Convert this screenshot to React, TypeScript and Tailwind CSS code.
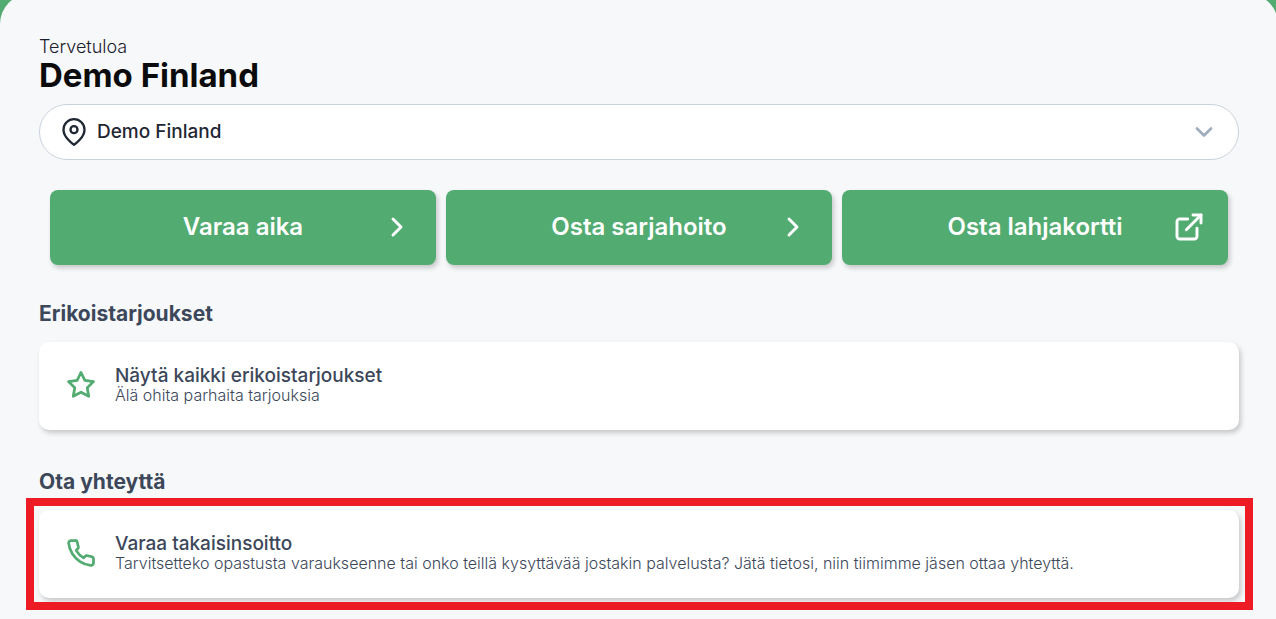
import React from 'react';
import type { IconType } from 'react-icons';
import { FiChevronDown, FiChevronRight, FiExternalLink, FiMapPin, FiPhone, FiStar } from 'react-icons/fi';

interface Action {
  label: string;
  icon: IconType;
}

interface InfoCardProps {
  icon: IconType;
  title: string;
  description: string;
  highlighted?: boolean;
}

const actions: Action[] = [
  { label: 'Varaa aika', icon: FiChevronRight },
  { label: 'Osta sarjahoito', icon: FiChevronRight },
  { label: 'Osta lahjakortti', icon: FiExternalLink },
];

const ActionButton: React.FC<Action> = ({ label, icon: Icon }) => (
  <button
    type="button"
    className="grid h-[75px] cursor-pointer grid-cols-[1fr_auto_1fr] items-center rounded-lg bg-[#52ab71] px-[23px] pb-[2px] text-white shadow-[2px_3px_5px_rgba(0,0,0,0.2)]"
  >
    <span className="col-start-2 whitespace-nowrap text-[24px] leading-8 font-semibold">{label}</span>
    <Icon size={32} strokeWidth={2.2} className="justify-self-end" aria-hidden="true" />
  </button>
);

const InfoCard: React.FC<InfoCardProps> = ({ icon: Icon, title, description, highlighted }) => (
  <div className="relative">
    <button
      type="button"
      className="flex h-[88px] w-full cursor-pointer items-center gap-[19px] rounded-[10px] bg-white px-[27px] pb-[2px] text-left shadow-[2px_3px_5px_rgba(0,0,0,0.2)]"
    >
      <Icon size={30} strokeWidth={2.2} className="shrink-0 text-[#52ab71]" aria-hidden="true" />
      <span className="flex flex-col">
        <span className="text-[19px] leading-5 font-medium text-[#3c475a]">{title}</span>
        <span className="text-[16px] leading-[18px] font-light text-[#3c475a]">{description}</span>
      </span>
    </button>
    {highlighted && (
      <div className="pointer-events-none absolute -inset-y-3 -right-[14px] -left-[13px] border-8 border-[#ed1c24]" />
    )}
  </div>
);

export default function App() {
  return (
    <div className="min-h-screen overflow-hidden bg-[#52ab71] font-['Inter',sans-serif]">
      {/* Panel runs slightly past the top and right edges, so only part of each corner shows */}
      <main className="-mt-[6px] -mr-[2px] min-h-[calc(100vh+6px)] rounded-t-[30px] bg-[#f7f8fa] pt-[41px] pr-[39px] pb-[21px] pl-[39px]">
        <header>
          <p className="text-[18px] leading-6 font-light text-[#1a202c]">Tervetuloa</p>
          <h1 className="text-[33px] leading-8 font-bold text-[#0b0b0d]">Demo Finland</h1>
        </header>

        <div className="mt-[13px] flex h-14 items-center rounded-full border border-[#cbd2dc] bg-white px-5 text-[#1f2733]">
          <FiMapPin size={28} className="shrink-0" aria-hidden="true" />
          <select
            aria-label="Toimipiste"
            className="ml-[9px] h-full min-w-0 flex-1 cursor-pointer appearance-none bg-transparent text-[19px] font-medium outline-none"
          >
            <option>Demo Finland</option>
          </select>
          <FiChevronDown size={28} strokeWidth={2.4} className="pointer-events-none shrink-0 text-[#a0aec0]" aria-hidden="true" />
        </div>

        <div className="mt-[30px] grid grid-cols-3 gap-[10px] px-[11px]">
          {actions.map((action) => (
            <ActionButton key={action.label} {...action} />
          ))}
        </div>

        <section className="mt-[35px]">
          <h2 className="mb-[14px] text-[21px] leading-7 font-bold text-[#3c475a]">Erikoistarjoukset</h2>
          <InfoCard icon={FiStar} title="Näytä kaikki erikoistarjoukset" description="Älä ohita parhaita tarjouksia" />
        </section>

        <section className="mt-[38px]">
          <h2 className="mb-[14px] text-[21px] leading-7 font-bold text-[#3c475a]">Ota yhteyttä</h2>
          <InfoCard
            icon={FiPhone}
            title="Varaa takaisinsoitto"
            description="Tarvitsetteko opastusta varaukseenne tai onko teillä kysyttävää jostakin palvelusta? Jätä tietosi, niin tiimimme jäsen ottaa yhteyttä."
            highlighted
          />
        </section>
      </main>
    </div>
  );
}
